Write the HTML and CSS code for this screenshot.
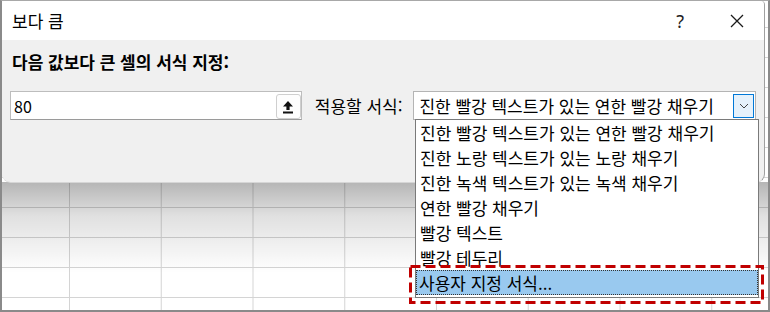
FILE: index.html
```html
<!DOCTYPE html>
<html lang="ko">
<head>
    <meta charset="UTF-8">
    <title>보다 큼</title>
    <link rel="stylesheet" href="styles.css">
</head>
<body>
    <div class="screen">
        <div class="sheet"></div>

        <div class="dialog">
            <div class="titlebar">
                <span class="title">보다 큼</span>
                <div class="controls">
                    <span class="help">?</span>
                    <svg class="close" width="14" height="14" viewBox="0 0 14 14">
                        <path d="M1 1 L13 13 M13 1 L1 13" stroke="#1a1a1a" stroke-width="1.3" fill="none"/>
                    </svg>
                </div>
            </div>

            <div class="dialog-body">
                <div class="prompt">다음 값보다 큰 셀의 서식 지정:</div>
                <div class="form-row">
                    <div class="value-box">
                        <span class="value">80</span>
                        <span class="pick-btn">
                            <svg width="12" height="14" viewBox="0 0 12 14">
                                <path d="M6 1 L11 6.5 L7.6 6.5 L7.6 10 L4.4 10 L4.4 6.5 L1 6.5 Z" fill="#111"/>
                                <rect x="1" y="11.5" width="10" height="2" fill="#111"/>
                            </svg>
                        </span>
                    </div>
                    <span class="apply-label">적용할 서식:</span>
                    <div class="select-box">
                        <span class="select-text">진한 빨강 텍스트가 있는 연한 빨강 채우기</span>
                        <span class="select-btn">
                            <svg width="10" height="6" viewBox="0 0 10 6">
                                <path d="M1 1 L5 5 L9 1" stroke="#444" stroke-width="1" fill="none"/>
                            </svg>
                        </span>
                    </div>
                </div>
            </div>
        </div>

        <ul class="dropdown">
            <li>진한 빨강 텍스트가 있는 연한 빨강 채우기</li>
            <li>진한 노랑 텍스트가 있는 노랑 채우기</li>
            <li>진한 녹색 텍스트가 있는 녹색 채우기</li>
            <li>연한 빨강 채우기</li>
            <li>빨강 텍스트</li>
            <li>빨강 테두리</li>
            <li class="selected">사용자 지정 서식...</li>
        </ul>

        <svg class="callout" width="355" height="39" viewBox="0 0 355 39">
            <rect x="1.5" y="1.5" width="352" height="36" fill="none" stroke="#c00000" stroke-width="3" stroke-dasharray="10 5"/>
        </svg>
    </div>
</body>
</html>
```

FILE: styles.css
```css
* {
    margin: 0;
    padding: 0;
    box-sizing: border-box;
}

body {
    font-family: "Noto Sans CJK KR", "Noto Sans", sans-serif;
    color: #000;
    background: #fff;
}

.screen {
    position: relative;
    width: 770px;
    height: 312px;
    border: 2px solid #8a8a8a;
    border-top: 1px solid #a8a8a8;
    overflow: hidden;
}

/* worksheet behind the dialog */
.sheet {
    height: 100%;
    background-color: #fff;
    background-image:
        linear-gradient(to bottom, transparent 181px, rgba(0, 0, 0, 0.29) 181px, rgba(0, 0, 0, 0.12) 215px, rgba(0, 0, 0, 0) 272px),
        linear-gradient(to right, #d4d4d4 1px, transparent 1px),
        linear-gradient(to bottom, #d4d4d4 1px, transparent 1px);
    background-size: 100% 100%, 91.75px 100%, 100% 30px;
    background-position: 0 0, 67px 0, 0 26px;
    background-repeat: no-repeat, repeat-x, repeat-y;
}

.dialog {
    position: absolute;
    top: 0;
    left: 0;
    width: 763px;
    height: 182px;
    background: #f0f0f0;
    border-right: 1px solid #a0a0a0;
    border-bottom: 1px solid #d6d6d6;
    border-radius: 2px 4px 9px 9px;
}

.titlebar {
    height: 39px;
    background: #fff;
    display: flex;
    align-items: center;
    justify-content: space-between;
    padding-left: 10px;
    border-radius: 2px 4px 0 0;
}

.title {
    font-size: 17px;
}

.controls {
    display: flex;
    align-items: center;
    gap: 46px;
    padding-right: 20px;
}

.help {
    font-family: "Noto Sans", sans-serif;
    font-size: 18px;
    color: #222;
}

.close {
    display: block;
}

.dialog-body {
    padding: 11px 8px 0;
}

.prompt {
    padding-left: 2px;
    font-size: 17px;
    font-weight: bold;
    line-height: 22px;
}

.form-row {
    display: flex;
    align-items: center;
    margin-top: 18px;
    height: 29px;
}

.value-box {
    width: 293px;
    height: 29px;
    background: #fff;
    border: 1px solid #bdbdbd;
    border-bottom-color: #9a9a9a;
    display: flex;
    align-items: center;
    justify-content: space-between;
}

.value {
    padding-left: 3px;
    font-size: 16px;
}

.pick-btn {
    align-self: flex-end;
    width: 25px;
    height: 25px;
    background: #fdfdfd;
    border: 1px solid #cfcfcf;
    border-radius: 3px;
    display: flex;
    align-items: center;
    justify-content: center;
}

.apply-label {
    width: 112px;
    padding-left: 13px;
    font-size: 17px;
}

.select-box {
    width: 344px;
    height: 29px;
    background: #fff;
    border: 1px solid #b4b4b4;
    display: flex;
    align-items: center;
    justify-content: space-between;
    padding: 0 1px 0 5px;
}

.select-text {
    font-size: 17px;
}

.select-btn {
    width: 21px;
    height: 24px;
    background: #e5f1fb;
    border: 1px solid #0078d7;
    display: flex;
    align-items: center;
    justify-content: center;
}

.dropdown {
    position: absolute;
    left: 413px;
    top: 118px;
    width: 344px;
    height: 179px;
    list-style: none;
    background: #fff;
    border: 1px solid #7a7a7a;
}

.dropdown li {
    height: 25px;
    line-height: 25px;
    padding-left: 4px;
    font-size: 17px;
    white-space: nowrap;
}

.dropdown li.selected {
    background: #99c9ef;
    outline: 1px dotted #333;
    outline-offset: -1px;
    padding-left: 3px;
}

.callout {
    position: absolute;
    left: 407px;
    top: 264px;
}
```
